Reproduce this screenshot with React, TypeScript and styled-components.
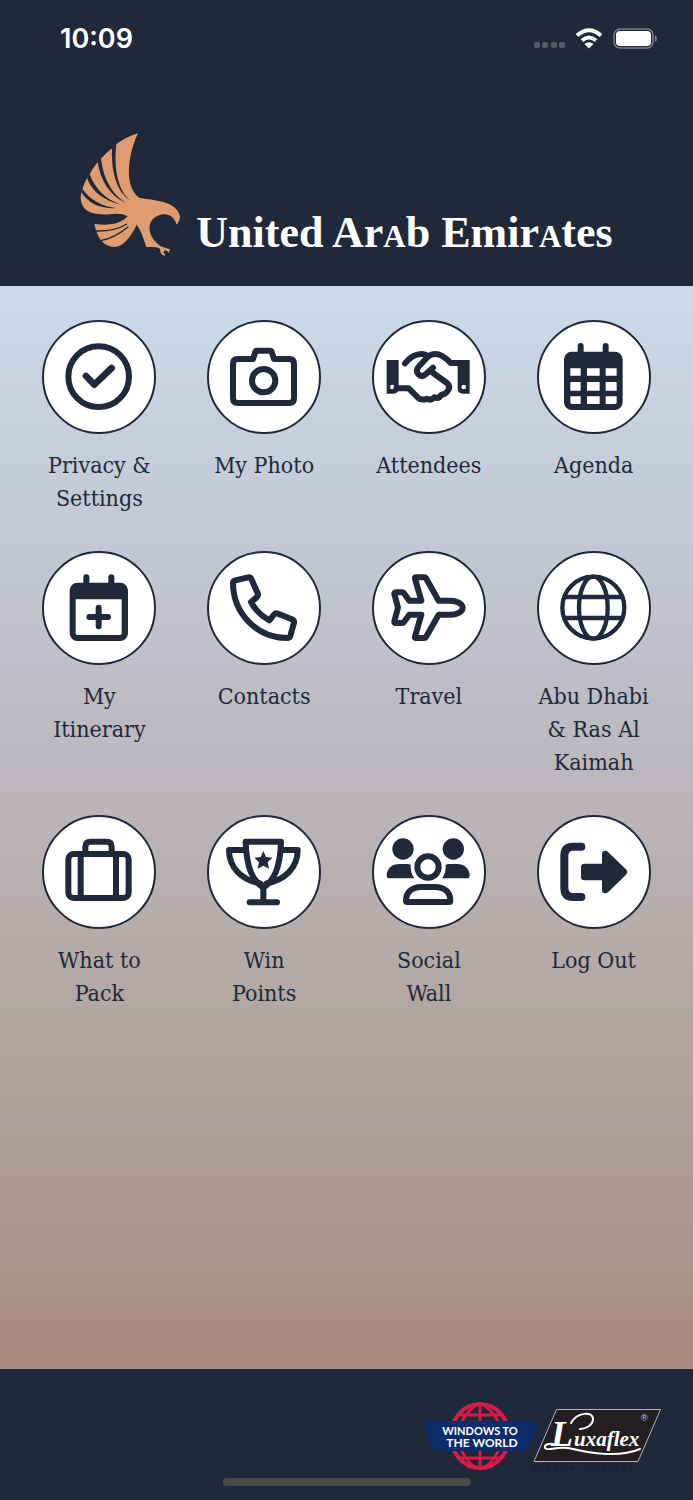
import React from "react";
import styled, { createGlobalStyle } from "styled-components";

const navy = "#202939";

const GlobalStyle = createGlobalStyle`
  *, *::before, *::after { box-sizing: border-box; }
  body { margin: 0; background: ${navy}; }
`;

const Screen = styled.div`
  min-height: 100vh;
  display: flex;
  flex-direction: column;
  background: ${navy};
  color: ${navy};
`;

const StatusBar = styled.div`
  height: 66px;
  padding: 10px 35px 0 60px;
  display: flex;
  align-items: center;
  justify-content: space-between;
  background: #22273a;
`;

const Clock = styled.time`
  padding-top: 2px;
  font: 600 27px/34px Inter, "Liberation Sans", sans-serif;
  color: #fff;
`;

const StatusIcons = styled.div`
  display: flex;
  align-items: center;
  gap: 10px;
`;

const Dots = styled.svg`
  margin-top: 13px;
`;

const Brand = styled.header`
  display: flex;
  align-items: flex-end;
  justify-content: center;
  gap: 16px;
  padding: 67px 16px 30px;
`;

const BrandName = styled.h1`
  margin: 0;
  font: 700 44px/46px "Liberation Serif", serif;
  color: #fff;
  white-space: nowrap;
`;

const SmallCap = styled.span`
  font-variant: small-caps;
`;

const Menu = styled.main`
  flex: 1;
  padding: 34px 17px;
  background: linear-gradient(
    #cbdaea 0%,
    #c4c7d4 23%,
    #bab6ba 47%,
    #b2a5a1 68%,
    #a99487 93%,
    #aa8f82 95%,
    #a68a7c 100%
  );
`;

const Grid = styled.nav`
  display: grid;
  grid-template-columns: repeat(4, 1fr);
  row-gap: 36px;
`;

const Tile = styled.a`
  display: flex;
  flex-direction: column;
  align-items: center;
  gap: 15px;
  color: inherit;
  text-decoration: none;
`;

const Disc = styled.span`
  width: 114px;
  height: 114px;
  display: flex;
  align-items: center;
  justify-content: center;
  border: 2px solid ${navy};
  border-radius: 50%;
  background: #fff;
`;

const Label = styled.span`
  font: 400 23px/33px "DejaVu Serif Condensed", "DejaVu Serif", serif;
  text-align: center;
  white-space: pre;
`;

const Footer = styled.footer`
  display: flex;
  flex-direction: column;
  padding: 33px 32px 14px;
`;

const Sponsors = styled.div`
  display: flex;
  justify-content: flex-end;
  align-items: flex-end;
  margin-bottom: 7px;

  svg + svg { margin-left: -4px; }
`;

const HomeIndicator = styled.div`
  width: 248px;
  height: 8px;
  align-self: center;
  border-radius: 4px;
  background: #4a4a4a;
`;

/* Line icons share a 342-unit square: three units to a pixel of the disc. */
const Glyph = styled.svg`
  width: 110px;
  height: 110px;
  display: block;
  fill: none;
  stroke: ${navy};
  stroke-width: 18;
  stroke-linecap: round;
  stroke-linejoin: round;

  .solid { fill: ${navy}; stroke: none; }
  .cell { fill: #fff; stroke: none; }
`;

const Icon = ({ children }: { children: React.ReactNode }) => (
  <Glyph viewBox="6 6 330 330" aria-hidden="true">{children}</Glyph>
);

const CheckIcon = () => (
  <Icon>
    <circle cx="170" cy="170" r="91" />
    <path d="M132 168L157 194L209 144" strokeWidth="20" />
  </Icon>
);

const CameraIcon = () => (
  <Icon>
    <path d="M92 117H138L145 96Q146 92 150 92H189Q193 92 194 96L201 117H247Q261 117 261 131V235Q261 249 247 249H92Q78 249 78 235V131Q78 117 92 117Z" />
    <circle cx="170" cy="182" r="35" />
  </Icon>
);

const HandshakeIcon = () => (
  <Icon>
    <g transform="translate(-37 -45)">
      <path className="solid" d="M81 165H117V250Q117 266 101 266H81ZM330 165H294V250Q294 266 310 266H330Z" />
      <circle className="cell" cx="98" cy="246" r="7" />
      <circle className="cell" cx="312" cy="246" r="7" />
      <path d="M136 175Q160 146 187 147Q197 148 204 153" />
      <path d="M296 174H273C258 158 245 147 227 147Q213 147 204 156L178 184Q166 197 176 208Q187 218 198 208L220 188" />
      <path d="M212 198L262 234Q274 244 265 257Q257 269 245 269Q237 283 224 277Q213 289 202 281Q189 287 177 280L147 250H110" />
    </g>
  </Icon>
);

const CalendarIcon = () => (
  <Icon>
    <path d="M131 78V100M206 78V100" />
    <rect className="solid" x="81" y="95" width="176" height="175" rx="23" />
    <path
      className="cell"
      d="M100 145h31v22h-31zM150 145h38v22h-38zM206 145h33v22h-33zM100 186h31v26h-31zM150 186h38v26h-38zM206 186h33v26h-33zM100 229h31v23h-26q-5 0-5-5zM150 229h38v23h-38zM206 229h33v18q0 5-5 5h-28z"
    />
  </Icon>
);

const CalendarPlusIcon = () => (
  <Icon>
    <path d="M133 79V100M208 79V100" />
    <rect className="solid" x="83" y="95" width="175" height="175" rx="23" />
    <path className="cell" d="M101 145h138v102q0 5-5 5h-128q-5 0-5-5z" />
    <path d="M170 170V226M142 198H198" />
  </Icon>
);

const PhoneIcon = () => (
  <Icon>
    <path
      transform="translate(-532 -33)"
      d="M614 122L655 112Q662 110 665 117L684 160Q687 167 681 172L664 186C676 209 695 228 719 241L733 224Q738 218 745 221L787 238Q794 241 793 248L782 288Q780 294 773 294C683 294 611 222 610 130Q610 124 614 122Z"
    />
  </Icon>
);

const PlaneIcon = () => (
  <Icon>
    <path
      transform="translate(-37 -33)"
      d="M309 203C309 190 290 182 272 182H237L199 115Q197 112 194 112H168Q165 112 166 116L185 182H149L133 160Q131 157 127 157H108Q103 157 104 162L114 199Q115 203 114 207L104 244Q103 249 108 249H127Q131 249 133 246L149 224H185L166 290Q165 294 168 294H194Q197 294 199 291L237 224H272C290 224 309 216 309 203Z"
    />
  </Icon>
);

const GlobeIcon = () => (
  <Icon>
    <g strokeWidth="13">
      <circle cx="169" cy="170" r="93" />
      <ellipse cx="169" cy="170" rx="43" ry="93" />
      <path d="M82 138H256M82 201H256" />
    </g>
  </Icon>
);

const LuggageIcon = () => (
  <Icon>
    <rect x="79" y="117" width="181" height="132" rx="16" />
    <path d="M116 117V249M222 117V249M130 115V96Q130 80 146 80H194Q209 80 209 96V115" />
  </Icon>
);

const TrophyIcon = () => (
  <Icon>
    <g transform="translate(-532 -45)">
      <path d="M648 125H754C752 205 732 242 701 263C670 242 650 205 648 125Z" />
      <path d="M648 150H598C598 205 638 240 692 250M754 150H804C804 205 764 240 710 250M701 262V307M660 307H742" />
      <path
        className="solid"
        d="M701 153L709 171L728 173L714 187L718 206L701 197L684 206L688 187L674 173L693 171Z"
      />
    </g>
  </Icon>
);

const PeopleIcon = () => (
  <Icon>
    <g transform="translate(-37 -45)">
      <circle className="solid" cx="130" cy="147" r="32" />
      <circle className="solid" cx="281" cy="147" r="32" />
      <path
        className="solid"
        d="M81 228C81 206 97 192 119 192H141Q148 192 153 194Q151 217 164 235H88Q81 235 81 228ZM330 228C330 206 314 192 292 192H270Q263 192 258 194Q260 217 247 235H323Q330 235 330 228Z"
      />
      <circle cx="205" cy="201" r="32" />
      <path d="M139 302C139 276 158 261 185 261H226C253 261 272 276 272 302Q272 306 268 306H143Q139 306 139 302Z" />
    </g>
  </Icon>
);

const LogOutIcon = () => (
  <Icon>
    <g transform="translate(-531 -45)">
      <path strokeWidth="24" d="M664 140H640Q613 140 613 167V264Q613 291 640 291H664" />
      <path
        className="solid"
        d="M673 191H726V162Q726 152 736 152Q740 152 744 156L798 208Q805 216 798 224L744 277Q740 280 736 280Q726 280 726 270V241H673Q663 241 663 231V201Q663 191 673 191Z"
      />
    </g>
  </Icon>
);

const Falcon = () => (
  <svg width="100" height="123" viewBox="54 39 300 369" aria-hidden="true">
    <path
      fill="#de9c70"
      d="M228 40C201 48 180 59 163 73L152 83Q132 98 117 116L108 125Q92 144 82 164L75 174Q66 190 61 209C54 226 54 245 65 262C80 282 110 285 142 283C165 280 185 281 197 289C178 310 140 320 97 311L102 331L107 344L116 360Q134 381 156 381C187 380 209 345 224 314C234 327 243 350 250 372L253 381H275Q287 381 294 386L295 397L301 405L310 407L309 402L304 398L307 391L316 393L320 399L324 388L299 380C285 372 268 355 264 335C258 312 270 290 296 284C317 280 336 288 344 314Q354 303 354 290C347 244 275 240 232 234C181 195 202 95 228 40Z"
    />
    <path
      fill={navy}
      d="M150 84L163 73C154 150 170 212 203 241C160 210 148 150 150 84ZM107 125L117 115C123 172 147 220 190 248C145 228 115 182 107 125ZM75 174L83 162C98 205 130 238 178 254C125 242 90 215 75 174ZM58 217L62 208C85 240 120 260 162 264C115 268 80 250 58 217Z"
    />
    <path fill="none" stroke={navy} strokeWidth="4" d="M101 333C140 334 172 326 195 312M115 362C150 356 177 338 199 320" />
  </svg>
);

const SignalDots = () => (
  <Dots width="31" height="8" viewBox="0 0 31 8" aria-hidden="true">
    {[0, 8, 17, 25].map((x) => (
      <rect key={x} x={x} y="1" width="6" height="6" rx="2" fill="#575b69" />
    ))}
  </Dots>
);

const Wifi = () => (
  <svg width="28" height="21" viewBox="0 0 28 21" aria-hidden="true">
    <path fill="none" stroke="#fff" strokeWidth="4" d="M2 7.5Q14-3 26 7.5M7 12.5Q14 6.5 21 12.5" />
    <path fill="#fff" d="M14 20.500L9.500 16Q14 12.500 18.500 16Z" />
  </svg>
);

const Battery = () => (
  <svg width="45" height="21" viewBox="0 0 45 21" aria-hidden="true">
    <rect x="1" y="1" width="39" height="19" rx="6" fill="none" stroke="#7c7f8c" strokeWidth="1.500" />
    <rect x="3" y="3" width="35" height="15" rx="4" fill="#fff" />
    <path d="M42 7Q44 8 44 10.500T42 14Z" fill="#7c7f8c" />
  </svg>
);

const WindowsLogo = () => (
  <svg width="114" height="69" viewBox="0 0 114 69" role="img" aria-label="Windows to the World">
    <g fill="none" stroke="#d51b49" strokeWidth="4">
      <ellipse cx="57" cy="34" rx="29" ry="32" />
      <path strokeWidth="3" d="M57 2V66M34 13H80M34 56H80M53 3Q43 10 38 22M61 3Q71 10 76 22M53 66Q43 59 38 47M61 66Q71 59 76 47" />
    </g>
    <path fill="#0d2c6c" d="M4 19H109Q114 19 113 23L105 46Q104 49 100 49H14Q10 49 9 46L1 23Q0 19 4 19Z" />
    <g fill="#fff" fontFamily="Lato, sans-serif" fontWeight="700" textAnchor="middle">
      <text x="57" y="33" fontSize="11">WINDOWS TO</text>
      <text x="59" y="45" fontSize="12">THE WORLD</text>
    </g>
  </svg>
);

const LuxaflexLogo = () => (
  <svg width="128" height="63" viewBox="0 0 128 63" role="img" aria-label="Luxaflex Window Fashions">
    <path fill="#231f20" stroke="#b3b1bd" strokeWidth="1" d="M23.500 1.500H127.500L105 53.500H1Z" />
    <g fill="#fff" fontFamily="Liberation Serif, serif" fontStyle="italic" fontWeight="700">
      <text x="18" y="38" fontSize="36">L</text>
      <text x="41" y="38" fontSize="21">uxaflex</text>
    </g>
    <g fill="none" stroke="#fff" strokeLinecap="round" strokeWidth="2">
      <path d="M38 15C44 4 60 3 60 11C60 17 53 21 47 21" />
      <path d="M22 37C16 34 11 37 12 40C15 44 24 37 40 41S86 50 107 41" />
    </g>
    <g fontFamily="Liberation Sans, sans-serif">
      <text x="108" y="13" fontSize="9" fill="#d0d0d4">®</text>
      <text x="0" y="61" fontSize="6" fill="#191b23" letterSpacing="3">WINDOW FASHIONS</text>
    </g>
  </svg>
);

const items: { label: string; icon: React.ReactNode }[] = [
  { label: "Privacy &\nSettings", icon: <CheckIcon /> },
  { label: "My Photo", icon: <CameraIcon /> },
  { label: "Attendees", icon: <HandshakeIcon /> },
  { label: "Agenda", icon: <CalendarIcon /> },
  { label: "My\nItinerary", icon: <CalendarPlusIcon /> },
  { label: "Contacts", icon: <PhoneIcon /> },
  { label: "Travel", icon: <PlaneIcon /> },
  { label: "Abu Dhabi\n& Ras Al\nKaimah", icon: <GlobeIcon /> },
  { label: "What to\nPack", icon: <LuggageIcon /> },
  { label: "Win\nPoints", icon: <TrophyIcon /> },
  { label: "Social\nWall", icon: <PeopleIcon /> },
  { label: "Log Out", icon: <LogOutIcon /> },
];

export default function App() {
  return (
    <Screen>
      <GlobalStyle />
      <StatusBar>
        <Clock>10:09</Clock>
        <StatusIcons>
          <SignalDots />
          <Wifi />
          <Battery />
        </StatusIcons>
      </StatusBar>
      <Brand>
        <Falcon />
        <BrandName>
          United Ar<SmallCap>a</SmallCap>b Emir<SmallCap>a</SmallCap>tes
        </BrandName>
      </Brand>
      <Menu>
        <Grid>
          {items.map(({ label, icon }) => (
            <Tile href="#" key={label}>
              <Disc>{icon}</Disc>
              <Label>{label}</Label>
            </Tile>
          ))}
        </Grid>
      </Menu>
      <Footer>
        <Sponsors>
          <WindowsLogo />
          <LuxaflexLogo />
        </Sponsors>
        <HomeIndicator />
      </Footer>
    </Screen>
  );
}
